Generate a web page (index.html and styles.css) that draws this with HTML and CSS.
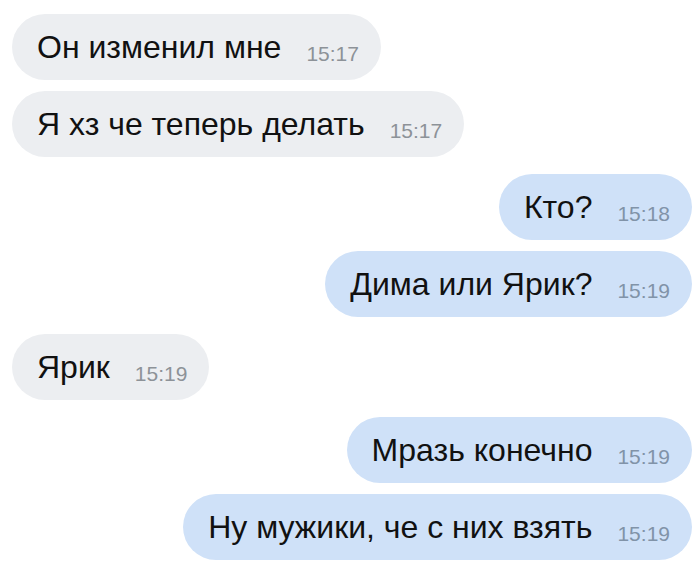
FILE: index.html
```html
<!DOCTYPE html>
<html lang="ru">
<head>
    <meta charset="UTF-8">
    <meta name="viewport" content="width=device-width, initial-scale=1.0">
    <title>Чат</title>
    <link rel="stylesheet" href="styles.css">
</head>
<body>
    <div class="chat">
        <div class="group in">
            <div class="msg"><span class="text">Он изменил мне</span><span class="time">15:17</span></div>
            <div class="msg"><span class="text">Я хз че теперь делать</span><span class="time">15:17</span></div>
        </div>
        <div class="group out">
            <div class="msg"><span class="text">Кто?</span><span class="time">15:18</span></div>
            <div class="msg"><span class="text">Дима или Ярик?</span><span class="time">15:19</span></div>
        </div>
        <div class="group in">
            <div class="msg"><span class="text">Ярик</span><span class="time">15:19</span></div>
        </div>
        <div class="group out">
            <div class="msg"><span class="text">Мразь конечно</span><span class="time">15:19</span></div>
            <div class="msg"><span class="text">Ну мужики, че с них взять</span><span class="time">15:19</span></div>
        </div>
    </div>
</body>
</html>
```

FILE: styles.css
```css
body {
    margin: 0;
    background: #fff;
    font-family: "Liberation Sans", Arial, sans-serif;
    color: #111;
}
.chat {
    display: flex;
    flex-direction: column;
    gap: 17px;
    padding: 14px 8px 0 12px;
}
.group {
    display: flex;
    flex-direction: column;
    gap: 11px;
}
.group.in {
    align-items: flex-start;
}
.group.out {
    align-items: flex-end;
}
.msg {
    height: 66px;
    box-sizing: border-box;
    padding: 0 22px 0 25px;
    border-radius: 33px;
    display: flex;
    align-items: center;
    white-space: nowrap;
}
.in .msg {
    background: #eceef1;
}
.out .msg {
    background: #cfe1f8;
}
.text {
    font-size: 32px;
    line-height: 36px;
}
.time {
    font-size: 21px;
    margin-left: 25px;
    color: #8d9298;
    position: relative;
    top: 7px;
}
.out .time {
    color: #8193a8;
}
```
